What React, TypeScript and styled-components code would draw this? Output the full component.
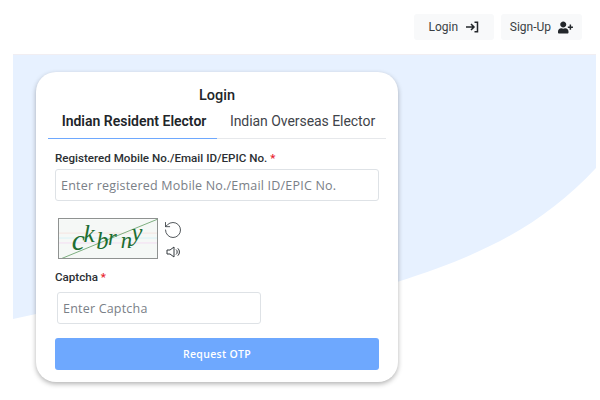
import React from 'react';
import styled, { createGlobalStyle } from 'styled-components';
import { RotateCcw } from 'lucide-react';
import { FaUserPlus } from 'react-icons/fa';

const GlobalStyle = createGlobalStyle`
  html, body {
    margin: 0;
    padding: 0;
    width: 600px;
    height: 400px;
    overflow: hidden;
    background: #fff;
    font-family: Roboto, "Liberation Sans", sans-serif;
  }
`;

const App: React.FC = () => {
  return (
    <Page>
      <GlobalStyle />
      <TopBar>
        <NavButton>
          Login
          <svg width="14" height="12" viewBox="0 0 14 12" fill="none" stroke="#23272b" strokeWidth="1.5">
            <path d="M1 6h7.5M6 3l3 3-3 3" />
            <path d="M9.5 1.2h3v9.6h-3" />
          </svg>
        </NavButton>
        <NavButton>
          Sign-Up
          <FaUserPlus size={15} color="#23272b" />
        </NavButton>
      </TopBar>
      <Hero>
        <HeroShape viewBox="0 0 583 345" preserveAspectRatio="none">
          <path d="M0 0H583V113C530 170 470 200 384 227L23 259L0 264Z" fill="#e7f1ff" />
        </HeroShape>
        <Card>
          <Title>Login</Title>
          <Tabs>
            <Tab $active>Indian Resident Elector</Tab>
            <Tab>Indian Overseas Elector</Tab>
          </Tabs>
          <Label>
            Registered Mobile No./Email ID/EPIC No. <Star>*</Star>
          </Label>
          <Input placeholder="Enter registered Mobile No./Email ID/EPIC No." />
          <CaptchaRow>
            <CaptchaImage>
              <svg width="100" height="41" viewBox="0 0 100 41">
                <rect width="100" height="41" fill="#f5f8f6" />
                <path d="M0 14H100" stroke="#f6e4df" />
                <path d="M0 19H100" stroke="#d8f2f6" />
                <path d="M0 24H100" stroke="#f3dcf2" />
                <path d="M0 41L100 0" stroke="#5c9a5f" strokeWidth="0.8" />
                <g fill="#1e6e32" fontFamily='"Liberation Serif", serif' fontStyle="italic">
                  <text x="13" y="31" fontSize="30">c</text>
                  <text x="25" y="23" fontSize="26">k</text>
                  <text x="38" y="30" fontSize="25">b</text>
                  <text x="50" y="26" fontSize="23">r</text>
                  <text x="63" y="29" fontSize="23">n</text>
                  <text x="74" y="22" fontSize="25">y</text>
                </g>
              </svg>
            </CaptchaImage>
            <CaptchaTools>
              <RotateCcw size={20} strokeWidth={1} color="#33383d" />
              <svg width="14" height="12" viewBox="0 0 14 12" fill="none" stroke="#33383d" strokeWidth="1">
                <path d="M1 4h3l4-3v10L4 8H1z" />
                <path d="M10 3.5a3.2 3.2 0 0 1 0 5" />
                <path d="M11.8 2.3a5 5 0 0 1 0 7.4" />
              </svg>
            </CaptchaTools>
          </CaptchaRow>
          <CaptchaLabel>
            Captcha <Star>*</Star>
          </CaptchaLabel>
          <CaptchaInput placeholder="Enter Captcha" />
          <SubmitButton>Request OTP</SubmitButton>
        </Card>
      </Hero>
    </Page>
  );
};

export default App;

const Page = styled.div`
  width: 600px;
  height: 400px;
  overflow: hidden;
  background: #fff;
`;

const TopBar = styled.div`
  display: flex;
  justify-content: flex-end;
  gap: 7px;
  height: 55px;
  padding: 14px 18px 0 0;
  box-sizing: border-box;
`;

const NavButton = styled.button`
  display: flex;
  align-items: center;
  justify-content: center;
  gap: 7px;
  height: 26px;
  padding: 0 9px;
  min-width: 80px;
  border: none;
  border-radius: 3px;
  background: #f8f9fa;
  color: #3a3f44;
  font-family: Roboto, sans-serif;
  font-size: 12px;
`;

const Hero = styled.div`
  position: relative;
  margin-left: 13px;
  width: 583px;
  height: 345px;
  padding: 17px 0 0 23px;
  box-sizing: border-box;
  box-shadow: 0 -1px 0 #f1eef2;
`;

const HeroShape = styled.svg`
  position: absolute;
  inset: 0;
  width: 100%;
  height: 100%;
`;

const Card = styled.div`
  position: relative;
  box-sizing: border-box;
  width: 362px;
  height: 310px;
  padding: 15px 19px 0;
  background: #fff;
  border-radius: 20px;
  box-shadow: 0 2px 5px rgba(0, 0, 0, 0.3);
`;

const Title = styled.div`
  font-size: 14.5px;
  font-weight: 500;
  line-height: 18px;
  text-align: center;
  color: #212529;
`;

const Tabs = styled.div`
  display: flex;
  margin: 3px -7px 0 -7px;
  border-bottom: 1px solid #e6e8eb;
  height: 30px;
`;

const Tab = styled.div<{ $active?: boolean }>`
  flex: ${(p) => (p.$active ? '0 0 169px' : '1')};
  height: 31px;
  padding-left: ${(p) => (p.$active ? '3px' : '2px')};
  line-height: 26px;
  text-align: center;
  font-size: 14px;
  letter-spacing: ${(p) => (p.$active ? '0' : '-0.05px')};
  font-weight: ${(p) => (p.$active ? 600 : 400)};
  color: ${(p) => (p.$active ? '#212529' : '#3f444a')};
  border-bottom: ${(p) => (p.$active ? '1px solid #6ea8fe' : 'none')};
  box-sizing: border-box;
`;

const Label = styled.div`
  margin-top: 12px;
  font-size: 11.6px;
  font-weight: 500;
  line-height: 14px;
  color: #2b2f33;
`;

const Star = styled.span`
  color: #e8212d;
`;

const Input = styled.input`
  display: block;
  box-sizing: border-box;
  width: 324px;
  height: 32px;
  margin-top: 4px;
  padding: 0 5px;
  border: 1px solid #dee2e6;
  border-radius: 3px;
  background: #fff;
  font-family: "Open Sans", sans-serif;
  font-size: 12.5px;
  letter-spacing: 0.2px;
  &::placeholder {
    color: #7a8087;
    opacity: 1;
  }
`;

const CaptchaRow = styled.div`
  display: flex;
  align-items: flex-start;
  gap: 5px;
  margin: 17px 0 0 3px;
`;

const CaptchaImage = styled.div`
  display: flex;
  width: 100px;
  height: 41px;
  border: 1px solid #8f9291;
  box-sizing: border-box;
  overflow: hidden;
`;

const CaptchaTools = styled.div`
  display: flex;
  flex-direction: column;
  align-items: center;
  gap: 6px;
  margin-top: 2px;
`;

const CaptchaLabel = styled(Label)`
  margin-top: 11px;
`;

const CaptchaInput = styled(Input)`
  width: 204px;
  margin: 8px 0 0 2px;
`;

const SubmitButton = styled.button`
  display: block;
  width: 324px;
  height: 32px;
  margin-top: 14px;
  border: none;
  border-radius: 3px;
  background: #6ea8fe;
  color: #fff;
  font-family: "Open Sans", sans-serif;
  font-size: 10.5px;
  font-weight: 600;
  letter-spacing: 0.3px;
`;
